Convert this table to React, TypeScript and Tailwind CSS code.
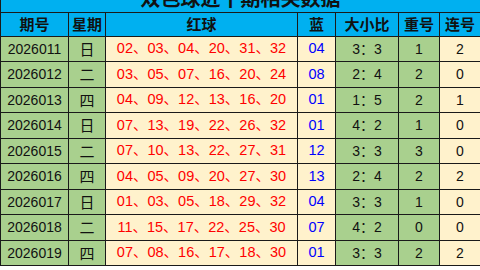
import React from "react";

const rows: [string, string, string, string, string, string, string][] = [
  ["2026011", "日", "02、03、04、20、31、32", "04", "3：3", "1", "2"],
  ["2026012", "二", "03、05、07、16、20、24", "08", "2：4", "2", "0"],
  ["2026013", "四", "04、09、12、13、16、20", "01", "1：5", "2", "1"],
  ["2026014", "日", "07、13、19、22、26、32", "01", "4：2", "1", "0"],
  ["2026015", "二", "07、10、13、22、27、31", "12", "3：3", "3", "0"],
  ["2026016", "四", "04、05、09、20、27、30", "13", "2：4", "2", "2"],
  ["2026017", "日", "01、03、05、18、29、32", "04", "3：3", "1", "0"],
  ["2026018", "二", "11、15、17、22、25、30", "07", "4：2", "0", "0"],
  ["2026019", "四", "07、08、16、17、18、30", "01", "3：3", "2", "2"],
];

const heights = [
  "h-[25px]",
  "h-[26px]",
  "h-[25px]",
  "h-[26px]",
  "h-[25px]",
  "h-[26px]",
  "h-[25px]",
  "h-[26px]",
  "h-[25px]",
];

const font = "font-['Liberation_Sans','Noto_Sans_CJK_SC',sans-serif]";
const cjk = "font-['Noto_Sans_CJK_SC',sans-serif]";
const cols = "grid grid-cols-[68px_37px_192px_38px_63px_41px_41px]";
const cell = "flex items-center justify-center border-r border-b border-[#1a1a1a]";

export default function App() {
  return (
    <div className="w-[480px] h-[270px] overflow-hidden bg-white">
      <div className="h-[13px] overflow-hidden bg-[#00b0f0] border-b border-l border-[#1a1a1a] flex items-end justify-center pb-[4px]">
        <div className={`${cjk} font-bold text-[20px] leading-[20px] text-[#111] whitespace-nowrap`}>
          双色球近十期相关数据
        </div>
      </div>
      <div className={`${cols} h-[24px] bg-[#00b0f0] border-l border-[#1a1a1a] ${cjk} font-bold text-[15px] text-[#111]`}>
        <div className={cell}>期号</div>
        <div className={cell}>星期</div>
        <div className={cell}>红球</div>
        <div className={cell}>蓝</div>
        <div className={cell}>大小比</div>
        <div className={cell}>重号</div>
        <div className={cell}>连号</div>
      </div>
      {rows.map((r, i) => (
        <div key={r[0]} className={`${cols} ${heights[i]} border-l border-[#1a1a1a] ${font} text-[14px] text-[#111]`}>
          <div className={`${cell} bg-[#a9d08e]`}>{r[0]}</div>
          <div className={`${cell} bg-[#a9d08e] ${cjk} text-[15px]`}>{r[1]}</div>
          <div className={`${cell} bg-[#fff2cc] text-[#ff0000] text-[14.5px]`}>{r[2]}</div>
          <div className={`${cell} bg-[#fff2cc] text-[#0000ff] text-[14.5px]`}>{r[3]}</div>
          <div className={`${cell} bg-[#a9d08e]`}>{r[4]}</div>
          <div className={`${cell} bg-[#a9d08e]`}>{r[5]}</div>
          <div className={`${cell} bg-[#fff2cc]`}>{r[6]}</div>
        </div>
      ))}
    </div>
  );
}
